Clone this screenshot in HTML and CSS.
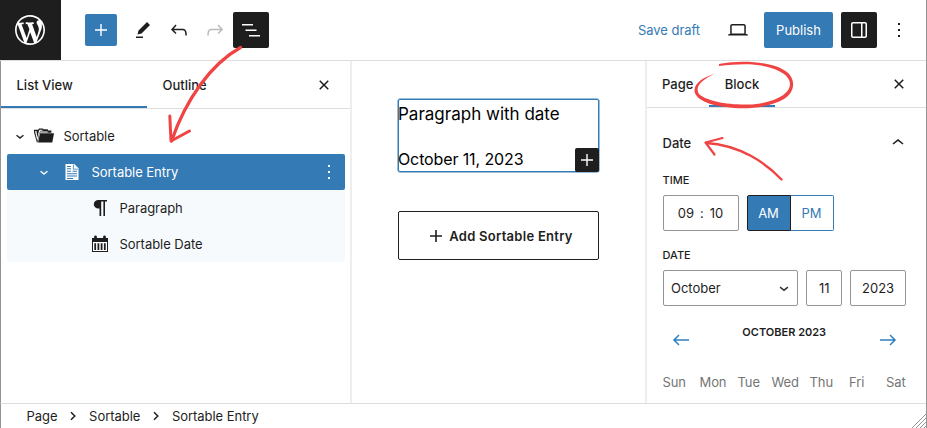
FILE: index.html
```
<!DOCTYPE html>
<html lang="en">
<head>
<meta charset="utf-8">
<title>Edit Page</title>
<link rel="stylesheet" href="styles.css">
</head>
<body>
<div class="editor">
  <header class="header">
    <a class="logo" aria-label="WordPress"><svg width="36" height="36" viewBox="-2 -2 24 24"><path d="M20 10c0-5.51-4.49-10-10-10C4.48 0 0 4.49 0 10c0 5.52 4.48 10 10 10 5.51 0 10-4.48 10-10zM7.78 15.37L4.37 6.22c.55-.02 1.17-.08 1.17-.08.5-.06.44-1.13-.06-1.11 0 0-1.45.11-2.37.11-.18 0-.37 0-.58-.01C4.12 2.69 6.87 1.11 10 1.11c2.33 0 4.45.87 6.05 2.34-.68-.11-1.65.39-1.65 1.58 0 .74.45 1.36.9 2.1.35.61.55 1.36.55 2.46 0 1.49-1.4 5-1.4 5l-3.03-8.37c.54-.02.82-.17.82-.17.5-.05.44-1.25-.06-1.22 0 0-1.44.12-2.38.12-.87 0-2.33-.12-2.33-.12-.5-.03-.56 1.2-.06 1.22l.92.08 1.26 3.41zM17.41 10c.24-.64.74-1.87.43-4.25.7 1.29 1.05 2.71 1.05 4.25 0 3.29-1.73 6.24-4.4 7.78.97-2.59 1.94-5.2 2.92-7.78zM6.1 18.09C3.12 16.65 1.11 13.53 1.11 10c0-1.3.23-2.48.72-3.59C3.25 10.3 4.67 14.2 6.1 18.09zm4.03-6.63l2.58 6.98c-.86.29-1.76.45-2.71.45-.79 0-1.57-.11-2.29-.33.81-2.38 1.62-4.74 2.42-7.1z"/></svg></a>
    <div class="tools">
      <button class="tool tool-add"><svg viewBox="0 0 24 24"><path d="M11.3 6h1.4v5.3H18v1.4h-5.3V18h-1.4v-5.3H6v-1.4h5.3z"/></svg></button>
      <button class="tool"><svg viewBox="0 0 24 24"><path d="m19 7-3-3-8.5 8.5-1 4 4-1L19 7Zm-7 11.5H5V20h7v-1.5Z"/></svg></button>
      <button class="tool"><svg viewBox="0 0 24 24"><path d="M18.3 11.7c-.6-.6-1.4-.9-2.3-.9H6.7l2.9-3.3-1.1-1-4.5 5L8.5 16l1-1-2.7-2.7H16c.5 0 .9.2 1.3.5 1 1 1 3.4 1 4.5v.3h1.5v-.2c0-1.5 0-4.3-1.5-5.7z"/></svg></button>
      <button class="tool disabled"><svg viewBox="0 0 24 24"><path d="M15.6 6.5l-1.1 1 2.9 3.3H8c-.9 0-1.7.3-2.3.9-1.4 1.5-1.4 4.2-1.4 5.6v.2h1.5v-.3c0-1.1 0-3.5 1-4.5.3-.3.7-.5 1.3-.5h9.2L14.5 15l1.1 1.1 4.6-4.6-4.6-5z"/></svg></button>
      <button class="tool dark"><svg viewBox="0 0 24 24"><path d="M3 6h11v1.5H3V6Zm3.5 5.5h11V13h-11v-1.5ZM21 17H10v1.5h11V17Z"/></svg></button>
    </div>
    <div class="actions">
      <a class="save">Save draft</a>
      <button class="tool"><svg viewBox="0 0 24 24"><path d="M20.5 16h-.7V8c0-1.1-.9-2-2-2H6.2c-1.1 0-2 .9-2 2v8h-.7c-.8 0-1.5.7-1.5 1.5h20c0-.8-.7-1.5-1.5-1.5zM5.7 8c0-.3.2-.5.5-.5h11.6c.3 0 .5.2.5.5v7.6H5.7V8z"/></svg></button>
      <button class="publish">Publish</button>
      <button class="tool dark"><svg viewBox="0 0 24 24"><path d="M18 4H6c-1.1 0-2 .9-2 2v12c0 1.1.9 2 2 2h12c1.1 0 2-.9 2-2V6c0-1.1-.9-2-2-2zm-4 14.5H6c-.3 0-.5-.2-.5-.5V6c0-.3.2-.5.5-.5h8v13zm4.5-.5c0 .3-.2.5-.5.5h-2.5v-13H18c.3 0 .5.2.5.5v12z"/></svg></button>
      <button class="tool more"><svg viewBox="0 0 24 24"><path d="M13 19h-2v-2h2v2zm0-6h-2v-2h2v2zm0-6h-2V5h2v2z"/></svg></button>
    </div>
  </header>

  <main class="body">
    <section class="list-panel">
      <nav class="tabs list-tabs">
        <span class="tab active">List View</span>
        <span class="tab">Outline</span>
        <svg class="close" viewBox="0 0 24 24"><path d="M12 13.06l3.712 3.713 1.061-1.06L13.061 12l3.712-3.712-1.06-1.06L12 10.938 8.288 7.227l-1.061 1.06L10.939 12l-3.712 3.712 1.06 1.061L12 13.061z"/></svg>
      </nav>
      <div class="tree">
        <div class="row">
          <svg class="chev" viewBox="0 0 24 24"><path d="M17.5 11.6L12 16l-5.5-4.4.9-1.2L12 14l4.5-3.6 1 1.2z"/></svg>
          <svg class="icon" viewBox="0 0 24 24"><path d="M4.900 18.500 2 8.300V5.800h4.200l.8-1.300h4l.5.800h4.200l.5 1.300h3.200v2.100H7.600L5.500 18.500z"/><path d="M8 9.300h14l-1.700 9.200H6z"/><path class="cut" d="M5.300 17 3.300 8.500V7h1.200l.8 6.500 1.700-6.700.7-1h2.800v.9H8.400l-.5.900h7.800v.9H7.300z"/></svg>
          <span>Sortable</span>
        </div>
        <div class="row nested selected">
          <svg class="chev" viewBox="0 0 24 24"><path d="M17.5 11.6L12 16l-5.5-4.4.9-1.2L12 14l4.5-3.6 1 1.2z"/></svg>
          <svg class="icon" viewBox="0 0 24 24"><path d="M5.500 4h8.800l4.200 4.200V20h-13z"/><path class="cut" d="M7 6h4v1H7zm0 2.300h4v1H7zm5.900-3.800h.8v4.200h4.300v.8h-5.100zM7 10.800h4v1H7zm5.500 0h4.500v1h-4.500zM7 13.200h10v1H7zm0 2.400h10v1H7zm0 2.300h6v1H7z"/></svg>
          <span>Sortable Entry</span>
          <svg class="row-more" viewBox="0 0 24 24"><path d="M13 19h-2v-2h2v2zm0-6h-2v-2h2v2zm0-6h-2V5h2v2z"/></svg>
        </div>
        <div class="row leaf">
          <svg class="icon" viewBox="0 0 24 24"><path d="M10.500 4H19v1.400h-2V20h-1.600V5.400h-2.200V20h-1.700v-7.600h-1c-2.700 0-4.700-1.700-4.700-4.200S7.800 4 10.500 4z"/></svg>
          <span>Paragraph</span>
        </div>
        <div class="row leaf last">
          <svg class="icon" viewBox="0 0 24 24"><path d="M4 6h2.100V4.900a1.400 1.400 0 0 1 2.800 0V6h6.200V4.900a1.400 1.400 0 0 1 2.800 0V6H20v14H4z"/><path class="cut" d="M5 10h14v9H5z"/><path d="M6.300 11.300h1.800V18H6.300zm3.200 0h1.800V18H9.500zm3.200 0h1.800V18h-1.800zm3.200 0h1.800V18h-1.800z"/></svg>
          <span>Sortable Date</span>
        </div>
      </div>
    </section>

    <section class="canvas">
      <div class="entry">
        <p class="para">Paragraph with date</p>
        <p class="date">October 11, 2023</p>
        <button class="inserter"><svg viewBox="0 0 24 24"><path d="M11.300 6h1.400v5.300H18v1.400h-5.300V18h-1.400v-5.300H6v-1.400h5.300z"/></svg></button>
      </div>
      <button class="add-entry"><svg viewBox="0 0 24 24"><path d="M11.200 6h1.600v5.200H18v1.600h-5.200V18h-1.600v-5.200H6v-1.600h5.200z"/></svg><span>Add Sortable Entry</span></button>
    </section>

    <aside class="sidebar">
      <nav class="tabs side-tabs">
        <span class="tab">Page</span>
        <span class="tab active">Block</span>
        <svg class="close" viewBox="0 0 24 24"><path d="M12 13.06l3.712 3.713 1.061-1.06L13.061 12l3.712-3.712-1.06-1.06L12 10.938 8.288 7.227l-1.061 1.06L10.939 12l-3.712 3.712 1.06 1.061L12 13.061z"/></svg>
      </nav>
      <div class="settings">
        <div class="panel-title"><span>Date</span><svg viewBox="0 0 24 24"><path d="M6.500 12.400L12 8l5.500 4.400-.9 1.200L12 10l-4.500 3.600-1-1.200z"/></svg></div>
        <div class="label">Time</div>
        <div class="fields">
          <div class="box clock"><span>09</span><span>:</span><span>10</span></div>
          <div class="ampm"><span class="am">AM</span><span class="pm">PM</span></div>
        </div>
        <div class="label date-label">Date</div>
        <div class="fields">
          <div class="box month"><span>October</span><svg viewBox="0 0 24 24"><path d="M17.500 11.600L12 16l-5.500-4.400.9-1.200L12 14l4.500-3.600 1 1.200z"/></svg></div>
          <div class="box day">11</div>
          <div class="box year">2023</div>
        </div>
        <div class="cal-head">
          <svg viewBox="0 0 24 24"><path d="M20 11.200H6.800l3.700-3.700-1-1L3.900 12l5.600 5.500 1-1-3.700-3.700H20z"/></svg>
          <strong>October 2023</strong>
          <svg viewBox="0 0 24 24"><path d="m14.500 6.500-1 1 3.700 3.700H4v1.600h13.200l-3.700 3.700 1 1 5.600-5.500z"/></svg>
        </div>
        <div class="week"><span>Sun</span><span>Mon</span><span>Tue</span><span>Wed</span><span>Thu</span><span>Fri</span><span>Sat</span></div>
      </div>
    </aside>
  </main>

  <footer class="crumbs">
    <span>Page</span>
    <svg viewBox="0 0 10 12"><path d="M3 2.200 6.800 6 3 9.800"/></svg>
    <span>Sortable</span>
    <svg viewBox="0 0 10 12"><path d="M3 2.200 6.800 6 3 9.800"/></svg>
    <span>Sortable Entry</span>
    <svg class="grip" viewBox="0 0 14 14"><path d="M0 14 14 0M4 14 14 4M8 14 14 8M12 14l2-2"/></svg>
  </footer>

  <svg class="marks" viewBox="0 0 927 428">
    <path d="M240.500 47.500C211 64 186 99 171.500 141" stroke-width="3.200"/>
    <path d="M169.800 116 171 141 189.500 131" stroke-width="3"/>
    <path d="M781.500 179.500C766 163 740 145 706 143" stroke-width="2.400"/>
    <path d="M722.500 138 705.500 142.500 714.500 154.500" stroke-width="2.200"/>
    <path class="fill" d="M719 64C745 59 771 63 782 69 797 76 796 92 784 99 769 108 744 110 726 107 707 105 694 98 694.500 90 695 83 702 78 715 73.500 701 80 694.500 87 699 94 706 101 728 105 748 104.500 769 104 790 96 790 84 790 76 780 70 766 66.500 752 63 736 64 719 66z"/>
  </svg>
</div>
</body>
</html>
```
FILE: styles.css
```
* { box-sizing: border-box; }
body { margin: 0; background: #fff; }
.editor { position: relative; width: 927px; height: 428px; overflow: hidden; display: flex; flex-direction: column; font: 13px/16px Inter, sans-serif; color: #1e1e1e; border-right: 1px solid #949494; }
button { border: 0; background: none; padding: 0; margin: 0; font: inherit; color: inherit; }
svg { display: block; flex: none; width: 24px; height: 24px; fill: currentColor; }
p { margin: 0; }

.header { display: flex; height: 61px; flex: none; border-bottom: 1px solid #ddd; }
.logo { width: 60.5px; height: 60px; background: #1e1e1e; color: #fff; display: grid; place-items: center; }
.logo svg { width: 36px; height: 36px; }
.tools { display: flex; align-items: center; padding-left: 24px; }
.tool { width: 36px; height: 36px; display: grid; place-items: center; border-radius: 2px; }
.tool-add { width: 32px; height: 32px; background: #347ab5; color: #fff; margin-right: 8px; }
.disabled { color: #bbb; }
.dark { background: #1e1e1e; color: #fff; }
.actions { display: flex; align-items: center; margin-left: auto; padding-right: 9.5px; }
.save { color: #347ab5; margin-right: 20px; letter-spacing: -.05px; }
.publish { width: 69px; height: 36px; background: #347ab5; color: #fff; border-radius: 2px; margin: 0 7.500px 0 8px; }
.more { margin-left: 4px; }

.body { display: flex; flex: 1; min-height: 0; }
.tabs { display: flex; align-items: stretch; border-bottom: 1px solid #ddd; font-weight: 500; }
.tab { display: flex; align-items: center; }
.tab.active { box-shadow: inset 0 -2px #347ab5; }
.close { align-self: center; }

.list-panel { width: 352px; border-left: 1px solid #949494; border-right: 2px solid #eee; }
.list-tabs { height: 48px; }
.list-tabs .tab { width: 147px; padding-left: 15.500px; }
.list-tabs .tab.active { width: 146px; }
.list-tabs .close { margin-left: 18px; }
.tree { padding: 9px 5px 0 5.500px; }
.row { display: flex; align-items: center; height: 36px; letter-spacing: -.04px; }
.chev { width: 16px; height: 16px; margin-left: 5px; stroke: currentColor; stroke-width: .6; }
.icon { margin: 0 8px 0 4px; }
.nested { padding-left: 24px; }
.nested .icon { margin-left: 8px; }
.selected { background: #347ab5; color: #fff; border-radius: 2px; }
.row-more { margin: 0 4px 0 auto; }
.leaf { padding-left: 77px; background: #f6fafd; }
.last { border-radius: 0 0 2px 2px; }
.cut { fill: #fff; }
.selected .cut { fill: #347ab5; }

.canvas { flex: 1; padding: 38px 46px 0; }
.entry { position: relative; height: 73px; border: 1px solid #347ab5; box-shadow: 0 0 0 .5px #347ab5; border-radius: 2px; color: #000; font-size: 17px; line-height: 27px; }
.para { padding-top: 1px; margin-left: -1px; }
.date { font-size: 16px; padding-top: 18px; margin-left: -1px; line-height: 26px; letter-spacing: -.12px; }
.inserter { position: absolute; right: -1px; bottom: -1px; width: 24px; height: 24px; background: #1e1e1e; color: #fff; border-radius: 2px; }
.add-entry { margin-top: 39px; width: 100%; height: 49px; border: 1px solid #1e1e1e; border-radius: 2px; display: flex; align-items: center; justify-content: center; gap: 1px; font-weight: 600; letter-spacing: .27px; }

.sidebar { width: 281px; border-left: 2px solid #eee; }
.side-tabs { height: 47px; padding-left: 15px; }
.side-tabs .tab:first-child { width: 47px; }
.side-tabs .tab.active { width: 66px; justify-content: center; }
.side-tabs .close { margin: 0 15.500px 0 auto; }
.settings { padding: 0 20px 0 15.500px; }
.panel-title { display: flex; height: 64px; padding-top: 6px; align-items: center; justify-content: space-between; font-weight: 500; margin-right: -4px; }
.label { font-size: 11px; font-weight: 500; text-transform: uppercase; line-height: 16px; margin-bottom: 7px; }
.date-label { margin-top: 16px; }
.fields { display: flex; gap: 8px; }
.box { height: 36px; border: 1px solid #949494; border-radius: 2px; display: flex; align-items: center; justify-content: center; }
.clock { width: 76px; gap: 6px; }
.ampm { display: flex; width: 87px; height: 36px; color: #347ab5; }
.ampm span { display: grid; place-items: center; border: 1px solid #347ab5; }
.am { width: 44px; background: #347ab5; color: #fff; border-radius: 2px 0 0 2px; }
.ampm .am { border-color: #1e1e1e; }
.ampm .pm { flex: 1; border-left: 0; border-radius: 0 2px 2px 0; }
.month { width: 136px; justify-content: space-between; padding: 0 4px 0 7.500px; }
.month svg { width: 18px; height: 18px; stroke: currentColor; stroke-width: .4; }
.day { width: 36px; }
.year { width: 56px; }
.cal-head { display: flex; justify-content: space-between; padding: 18px 6px 0; height: 68px; }
.cal-head svg { color: #2f80c0; margin-top: 4px; }
.cal-head strong { font-size: 11px; font-weight: 600; text-transform: uppercase; }
.week { display: grid; grid-template-columns: 37px 38px 34px 38px 39.500px 37px auto; color: #757575; letter-spacing: -.1px; }

.crumbs { height: 25px; flex: none; border-top: 1px solid #ddd; border-left: 1px solid #949494; display: flex; align-items: center; padding-left: 25.500px; letter-spacing: -.04px; }
.crumbs svg { width: 10px; height: 12px; margin: 0 10.800px; fill: none; stroke: #1e1e1e; stroke-width: 1.500; }
.crumbs .grip { width: 14px; height: 14px; margin: 10px 0 0 auto; stroke: #949494; stroke-width: 1; }

.marks { position: absolute; left: 0; top: 0; width: 927px; height: 428px; fill: none; stroke: #f04444; stroke-linecap: round; stroke-linejoin: round; pointer-events: none; }
.marks .fill { fill: #f04444; stroke: none; }
```
